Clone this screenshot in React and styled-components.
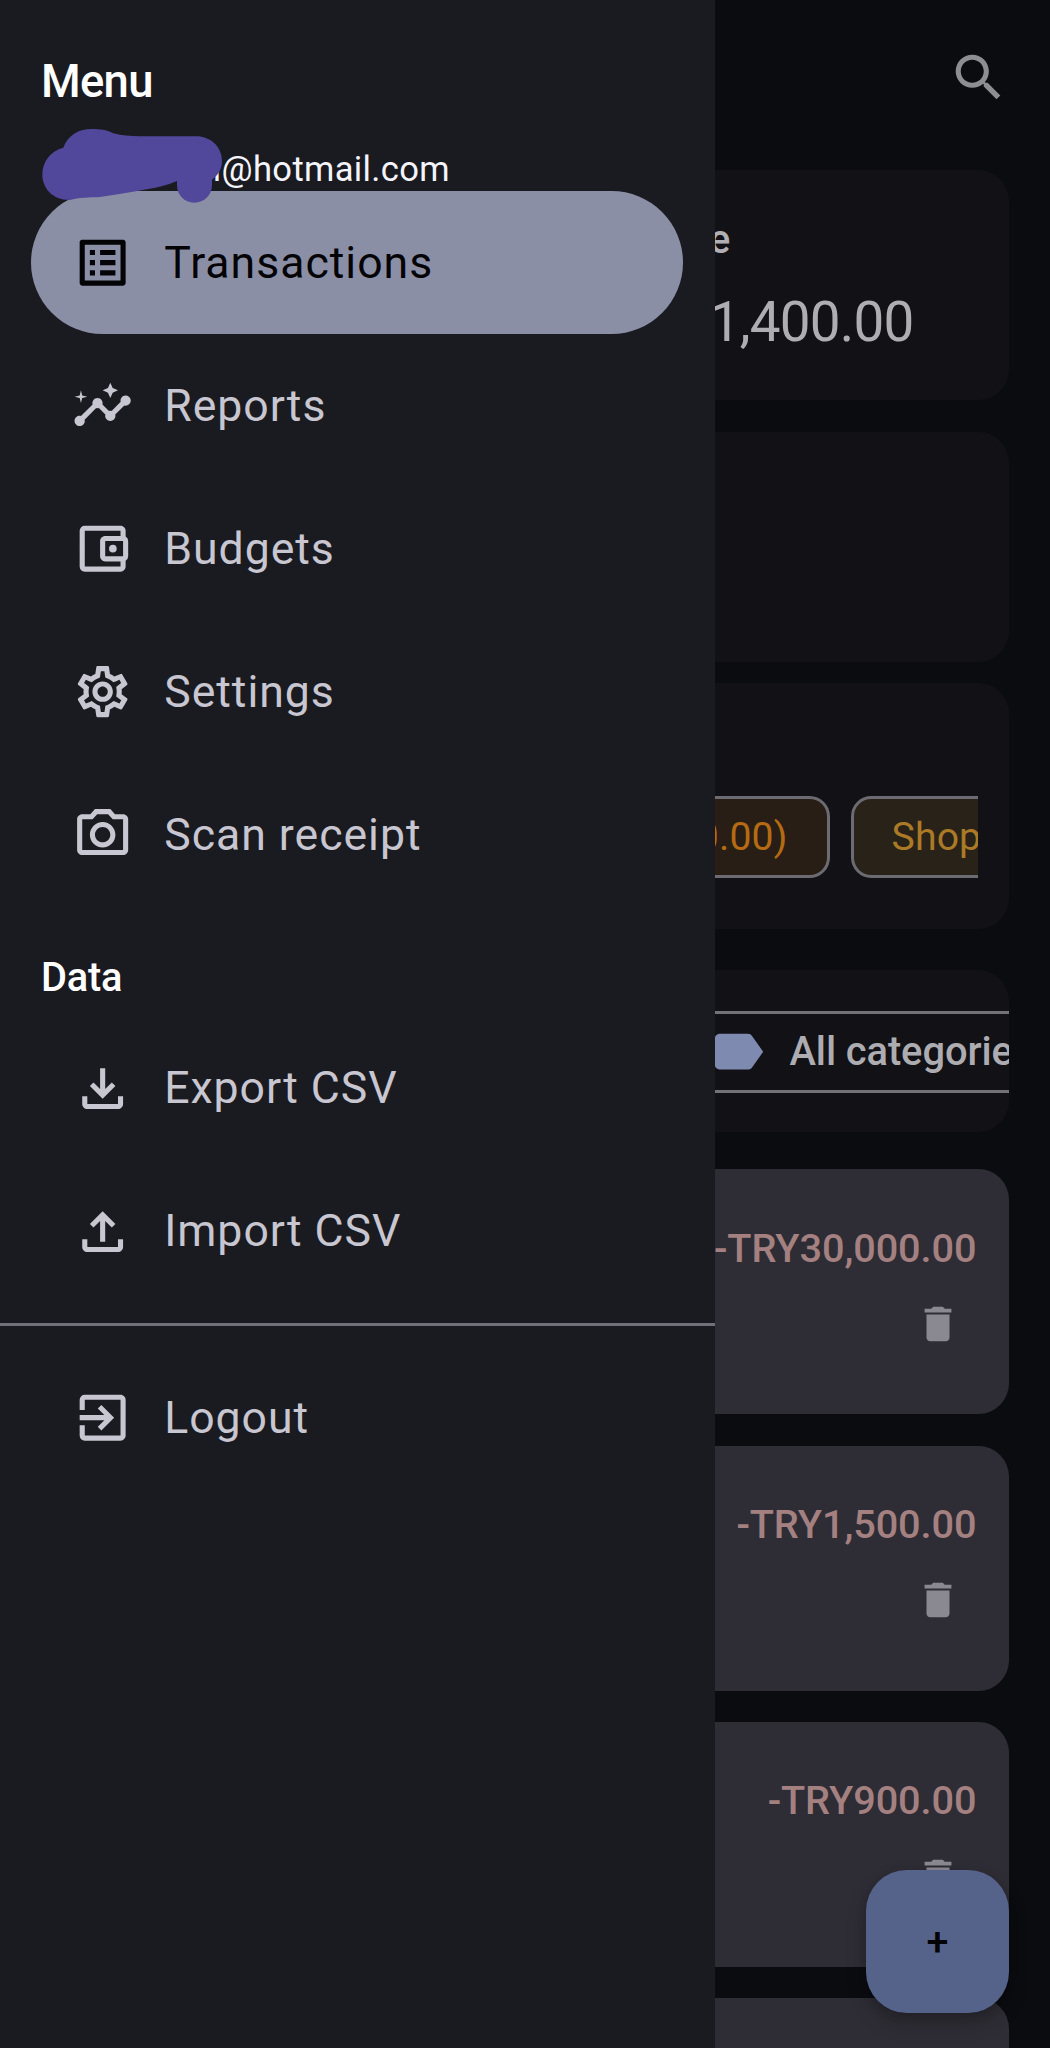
import React from 'react';
import styled, { createGlobalStyle } from 'styled-components';
import {
  MdListAlt,
  MdInsights,
  MdOutlineAccountBalanceWallet,
  MdOutlineSettings,
  MdOutlinePhotoCamera,
  MdOutlineFileDownload,
  MdOutlineFileUpload,
  MdExitToApp,
  MdSearch,
  MdDelete,
  MdLabel,
} from 'react-icons/md';

const GlobalStyle = createGlobalStyle`
  * { box-sizing: border-box; }
  body {
    margin: 0;
    background: #0b0c10;
    font-family: Roboto, "Liberation Sans", sans-serif;
  }
`;

const Screen = styled.div`
  position: relative;
  display: flex;
  width: 1050px;
  height: 2048px;
  overflow: hidden;
  background: #0b0c10;
`;

/* ---- drawer ---- */

const Drawer = styled.nav`
  flex: none;
  display: flex;
  flex-direction: column;
  width: 714.6px;
  height: 100%;
  padding-top: 51.6px;
  background: #1a1b20;
`;

const DrawerTitle = styled.h1`
  margin: 0;
  padding-left: 41px;
  font-size: 45.4px;
  line-height: 60px;
  font-weight: 500;
  letter-spacing: -0.7px;
  color: #fff;
`;

const Account = styled.div`
  position: relative;
  height: 79.8px;
  padding: 33px 0 0 212.8px;
  font-size: 34.6px;
  line-height: 49px;
  letter-spacing: 0.34px;
  color: #f5f4fb;
  white-space: nowrap;
`;

const Scribble = styled.svg`
  position: absolute;
  left: 40px;
  top: 14px;
  width: 184px;
  height: 80px;
`;

const NavItem = styled.a`
  display: flex;
  align-items: center;
  gap: 30.8px;
  height: 143.05px;
  flex: none;
  margin: 0 31.2px;
  padding-left: 40.9px;
  border-radius: 71.5px;
  font-size: 44.6px;
  letter-spacing: 0.98px;
  color: ${(p) => (p.$active ? '#040406' : '#c8c6d0')};
  background: ${(p) => (p.$active ? '#8b8fa6' : 'transparent')};

  svg {
    flex: none;
    width: 61.3px;
    height: 61.3px;
  }
`;

const SectionTitle = styled.h2`
  margin: 0;
  height: 110.2px;
  padding: 46px 0 0 41px;
  font-size: 39.8px;
  line-height: 50px;
  font-weight: 500;
  letter-spacing: -0.2px;
  color: #fff;
`;

const Divider = styled.hr`
  flex: none;
  width: 100%;
  height: 3px;
  margin: 20.2px 0 20.4px;
  border: 0;
  background: #716f78;
`;

/* ---- dimmed page ---- */

const Page = styled.main`
  flex: 1;
  min-width: 0;
  height: 100%;
  overflow: hidden;
  padding-right: 41px;
`;

const TopBar = styled.header`
  display: flex;
  justify-content: flex-end;
  height: 169.6px;
  padding-top: 47.3px;
  color: #8d8d92;

  svg { width: 61.3px; height: 61.3px; }
`;

const Card = styled.section`
  height: ${(p) => p.$height}px;
  margin-bottom: ${(p) => p.$gap}px;
  border-radius: 0 30.6px 30.6px 0;
  overflow: hidden;
  background: #121116;
`;

const BalanceLabel = styled.div`
  display: flex;
  justify-content: flex-end;
  width: 15.7px;
  padding-top: 45.6px;
  font-size: 39.8px;
  line-height: 50px;
  font-weight: 500;
  color: #b0afb4;
`;

const BalanceValue = styled.div`
  display: flex;
  justify-content: flex-end;
  width: 198.8px;
  padding-top: 27.2px;
  font-size: 54.8px;
  line-height: 60px;
  letter-spacing: -0.8px;
  color: #aeadb2;
`;

const ChipRow = styled.div`
  display: flex;
  gap: 20.6px;
  margin-right: 31px;
  padding-top: 112.6px;
  overflow: hidden;
`;

const Chip = styled.span`
  flex: none;
  display: flex;
  align-items: center;
  height: 82px;
  border: 3px solid #6c6b71;
  border-radius: 20.4px;
  font-size: 39.2px;
  letter-spacing: 0.1px;
  color: ${(p) => p.$ink};
  background: ${(p) => p.$fill};
`;

const CutChip = styled(Chip)`
  width: 115.4px;
  justify-content: flex-end;
  padding-right: 39.6px;
  border-left: 0;
  border-radius: 0 20.4px 20.4px 0;
`;

const NextChip = styled(Chip)`
  width: 220px;
  padding-left: 38px;
`;

const FilterButton = styled.div`
  display: flex;
  align-items: center;
  gap: 20.8px;
  height: 82px;
  margin-top: 40.7px;
  border: solid #737277;
  border-width: 3px 0;
  font-size: 39.9px;
  font-weight: 500;
  letter-spacing: -0.1px;
  color: #adacb1;
  white-space: nowrap;

  svg {
    flex: none;
    width: 61.3px;
    height: 61.3px;
    margin-left: -7.2px;
    color: #7f8ab0;
  }
`;

const Transaction = styled.article`
  display: flex;
  flex-direction: column;
  align-items: flex-end;
  height: 245.2px;
  margin-bottom: 31.2px;
  padding: 54.4px 32.6px 0 0;
  border-radius: 0 30.6px 30.6px 0;
  background: #2e2d35;

  svg {
    width: 46px;
    height: 46px;
    margin: 27.2px 15.6px 0 0;
    color: #8a8992;
  }
`;

const Amount = styled.span`
  font-size: 39.7px;
  line-height: 50px;
  font-weight: 500;
  letter-spacing: -0.1px;
  white-space: nowrap;
  color: #a48180;
`;

const AddButton = styled.button`
  position: absolute;
  right: 41px;
  bottom: 35.2px;
  display: flex;
  align-items: center;
  justify-content: center;
  width: 143px;
  height: 143px;
  padding: 2px 0 0;
  border: 0;
  border-radius: 40.9px;
  font: 500 39.5px/50px Roboto, "Liberation Sans", sans-serif;
  color: #040406;
  background: #55628a;
  box-shadow: 0 10px 20px rgba(0, 0, 0, 0.2), 0 3px 8px rgba(0, 0, 0, 0.12);
`;

const mainItems = [
  { label: 'Transactions', icon: MdListAlt, active: true },
  { label: 'Reports', icon: MdInsights },
  { label: 'Budgets', icon: MdOutlineAccountBalanceWallet },
  { label: 'Settings', icon: MdOutlineSettings },
  { label: 'Scan receipt', icon: MdOutlinePhotoCamera },
];

const dataItems = [
  { label: 'Export CSV', icon: MdOutlineFileDownload },
  { label: 'Import CSV', icon: MdOutlineFileUpload },
];

const amounts = ['-TRY30,000.00', '-TRY1,500.00', '-TRY900.00'];

function NavList({ items }) {
  return items.map(({ label, icon: Icon, active }) => (
    <NavItem key={label} $active={active}>
      <Icon />
      {label}
    </NavItem>
  ));
}

export default function App() {
  return (
    <Screen>
      <GlobalStyle />
      <Drawer>
        <DrawerTitle>Menu</DrawerTitle>
        <Account>
          i@hotmail.com
          <Scribble viewBox="120 285 552 240">
            <path
              fill="#51489b"
              d="M127 430C127 392 152 360 190 350C203 315 233 294 275 294C300 294 318 296 340 307C365 314 390 316 420 316H588C632 316 666 348 666 390C666 412 656 432 636 446V462C636 492 613 515 583 515C553 515 531 492 531 462V450C500 463 470 470 440 475C390 484 345 492 300 498C270 500 235 499 210 507C160 508 127 474 127 430Z"
            />
          </Scribble>
        </Account>
        <NavList items={mainItems} />
        <SectionTitle>Data</SectionTitle>
        <NavList items={dataItems} />
        <Divider />
        <NavItem>
          <MdExitToApp />
          Logout
        </NavItem>
      </Drawer>
      <Page>
        <TopBar>
          <MdSearch />
        </TopBar>
        <Card $height={230.4} $gap={32}>
          <BalanceLabel>e</BalanceLabel>
          <BalanceValue>1,400.00</BalanceValue>
        </Card>
        <Card $height={230.4} $gap={20.6} />
        <Card $height={246.4} $gap={40.6}>
          <ChipRow>
            <CutChip $ink="#b46b13" $fill="#291e15">0.00)</CutChip>
            <NextChip $ink="#ab7a27" $fill="#292219">Shop</NextChip>
          </ChipRow>
        </Card>
        <Card $height={162.3} $gap={37}>
          <FilterButton>
            <MdLabel />
            All categories
          </FilterButton>
        </Card>
        {amounts.map((amount) => (
          <Transaction key={amount}>
            <Amount>{amount}</Amount>
            <MdDelete />
          </Transaction>
        ))}
        <Transaction />
      </Page>
      <AddButton aria-label="Add">+</AddButton>
    </Screen>
  );
}
